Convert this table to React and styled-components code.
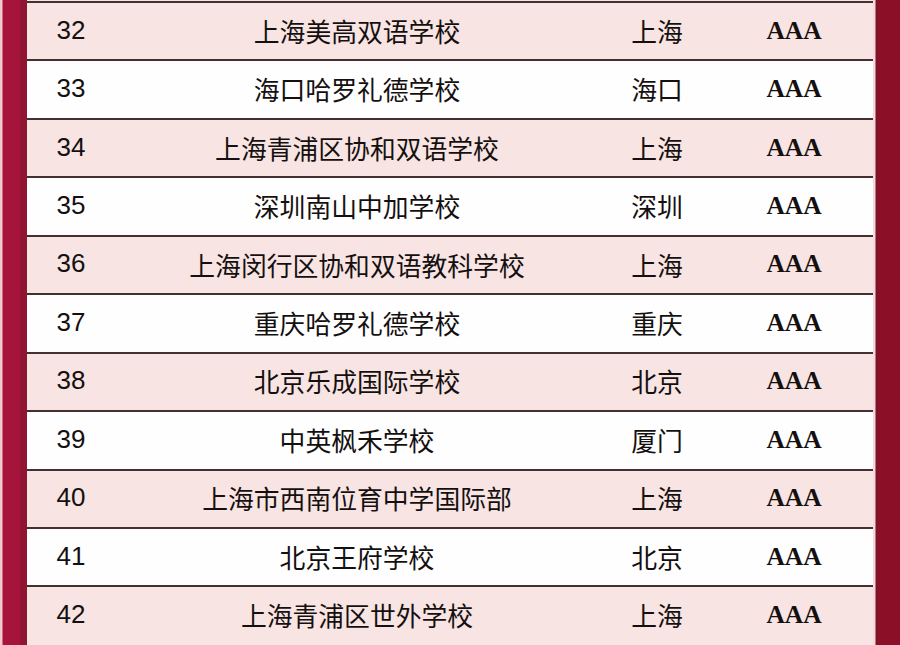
import React from "react";
import styled, { createGlobalStyle } from "styled-components";

const GlobalStyle = createGlobalStyle`
  html, body {
    margin: 0;
    padding: 0;
    background: #8c1028;
    overflow: hidden;
  }
`;

const Page = styled.div`
  display: flex;
  width: 900px;
  height: 645px;
  overflow: hidden;
`;

const LeftEdge = styled.div`
  width: 27px;
  flex-shrink: 0;
  background: linear-gradient(
    to right,
    #f1c9cf 0px,
    #f1c9cf 2px,
    #a7143b 3px,
    #a7143b 19px,
    #8f1533 21px,
    #8f1533 27px
  );
`;

const RightEdge = styled.div`
  width: 27px;
  flex-shrink: 0;
  background: linear-gradient(
    to right,
    #f6dadd 0px,
    #f6dadd 2px,
    #7d1528 3px,
    #7d1528 4px,
    #8b1027 5px,
    #8b1027 27px
  );
`;

const Table = styled.div`
  flex: 1;
  display: flex;
  flex-direction: column;
  padding-top: 1px;
  background: #f8e4e2;
`;

const Row = styled.div`
  display: grid;
  grid-template-columns: 88px 484px 116px 158px;
  align-items: center;
  flex-shrink: 0;
  box-sizing: border-box;
  height: 58.45px;
  padding-bottom: 1px;
  border-top: 2px solid #443030;
  background: ${(p) => (p.$alt ? "#fefefe" : "#f8e4e2")};
  color: #151010;
`;

const Num = styled.div`
  text-align: center;
  font-family: "Liberation Sans", Arial, sans-serif;
  font-size: 26px;
  padding-bottom: 1px;
`;

const Cell = styled.div`
  text-align: center;
  font-family: "Noto Sans CJK SC", "Noto Sans", sans-serif;
  font-size: 25.8px;
  line-height: 1;
  white-space: nowrap;
`;

const Grade = styled.div`
  text-align: center;
  font-family: "Liberation Serif", "Times New Roman", serif;
  font-weight: bold;
  font-size: 25.5px;
`;

const rows = [
  ["32", "上海美高双语学校", "上海"],
  ["33", "海口哈罗礼德学校", "海口"],
  ["34", "上海青浦区协和双语学校", "上海"],
  ["35", "深圳南山中加学校", "深圳"],
  ["36", "上海闵行区协和双语教科学校", "上海"],
  ["37", "重庆哈罗礼德学校", "重庆"],
  ["38", "北京乐成国际学校", "北京"],
  ["39", "中英枫禾学校", "厦门"],
  ["40", "上海市西南位育中学国际部", "上海"],
  ["41", "北京王府学校", "北京"],
  ["42", "上海青浦区世外学校", "上海"],
];

export default function App() {
  return (
    <>
      <GlobalStyle />
      <Page>
        <LeftEdge />
        <Table>
          {rows.map(([n, name, city], i) => (
            <Row key={n} $alt={i % 2 === 1}>
              <Num>{n}</Num>
              <Cell>{name}</Cell>
              <Cell>{city}</Cell>
              <Grade>AAA</Grade>
            </Row>
          ))}
        </Table>
        <RightEdge />
      </Page>
    </>
  );
}
